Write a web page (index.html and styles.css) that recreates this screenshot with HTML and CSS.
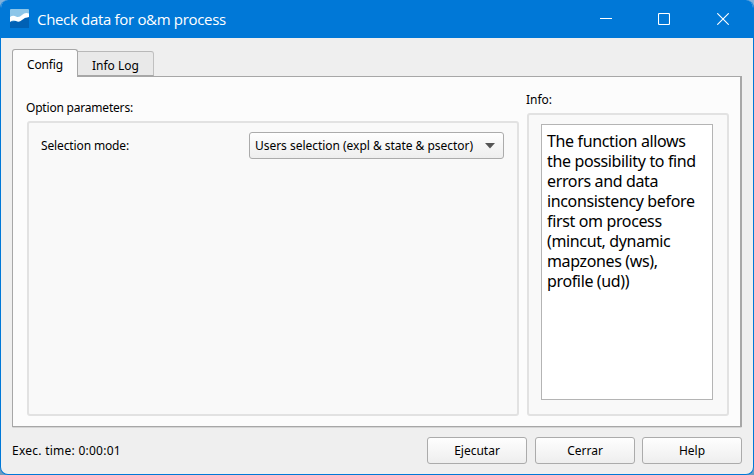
FILE: index.html
```html
<!DOCTYPE html>
<html lang="es">
<head>
<meta charset="utf-8">
<title>Check data for o&amp;m process</title>
<link rel="stylesheet" href="styles.css">
</head>
<body>
<div class="window">
  <header class="titlebar">
    <svg class="logo" width="19" height="19" viewBox="0 0 19 19"><rect width="19" height="19" rx="1" fill="#8dc6e9"/><path d="M0 12Q4 13 8 11T19 8V19H0Z" fill="#0061b5"/><path d="M0 8Q3 6 6 7.500T12 6T19 4.500V8Q15 8 12 11T6 12T0 13Z" fill="#fff"/></svg>
    <h1 class="title">Check data for o&amp;m process</h1>
    <div class="controls">
      <svg width="12" height="12" viewBox="0 0 12 12"><path d="M0 5.500H12"/></svg>
      <svg width="12" height="12" viewBox="0 0 12 12"><rect x=".5" y=".5" width="11" height="11" rx="1"/></svg>
      <svg width="12" height="12" viewBox="0 0 12 12"><path d="M.3.3 11.700 11.700M11.700.3.3 11.700"/></svg>
    </div>
  </header>
  <main class="content">
    <nav class="tabs">
      <div class="tab active"><span class="t-config">Config</span></div>
      <div class="tab"><span class="t-log">Info Log</span></div>
    </nav>
    <div class="panel">
      <section class="options">
        <div class="label t-options">Option parameters:</div>
        <div class="group row">
          <span class="t-mode">Selection mode:</span>
          <div class="combo"><span class="t-combo">Users selection (expl &amp; state &amp; psector)</span>
            <svg width="10" height="6" viewBox="0 0 10 6"><path d="M0 0H10L5 5.500Z" fill="#555"/></svg>
          </div>
        </div>
      </section>
      <section class="info">
        <div class="label t-info">Info:</div>
        <div class="group">
          <div class="textbox">The function allows<br>the possibility to find<br>errors and data<br>inconsistency before<br>first om process<br>(mincut, dynamic<br>mapzones (ws),<br>profile (ud))</div>
        </div>
      </section>
    </div>
    <footer class="footer">
      <span class="status">Exec. time: 0:00:01</span>
      <button class="btn">Ejecutar</button>
      <button class="btn">Cerrar</button>
      <button class="btn last">Help</button>
    </footer>
  </main>
</div>
</body>
</html>
```
FILE: styles.css
```css
* { box-sizing: border-box; }
body {
  margin: 0;
  background: linear-gradient(#82b2dc, #6d9cc0);
  font: 12px/16px "Noto Sans", sans-serif;
  color: #000;
  white-space: nowrap;
}
.window {
  width: 754px;
  height: 475px;
  border: 1px solid #0078d7;
  border-top: 0;
  border-radius: 8px;
  overflow: hidden;
  background: #efefef;
}
.titlebar {
  height: 38px;
  background: #0078d7;
  display: flex;
  align-items: center;
  padding: 0 24px 0 9px;
  color: #fff;
}
.logo { margin: -1px 8px 0 0; }
.title { margin: 0; font: 15px/20px "Open Sans", sans-serif; letter-spacing: -0.32px; }
.controls { margin-left: auto; display: flex; gap: 47px; }
.controls svg { fill: none; stroke: #fff; stroke-width: 1.1; }
.controls svg:first-child { margin-right: -1px; }
.content { padding: 11px 11px 0; }
.tabs { display: flex; align-items: flex-end; height: 28px; margin-bottom: -1px; position: relative; }
.tab {
  width: 76px;
  height: 25px;
  margin-bottom: 1px;
  padding: 6px 0 0 14px;
  background: #e9e9e9;
  border: 1px solid #b8b8b8;
  border-left: 0;
  border-right: 1px solid #c0c0c0;
  border-bottom-color: #a7a7a7;
  border-radius: 0 3px 0 0;
}
.tab.active {
  width: 66px;
  height: 28px;
  margin: 0;
  padding-top: 7px;
  background: #fcfcfc;
  border: 1px solid #a7a7a7;
  border-bottom: 0;
  border-radius: 3px 3px 0 0;
}
.t-config { letter-spacing: -0.15px; }
.panel {
  height: 351px;
  border: 1px solid #a7a7a7;
  border-right-width: 2px;
  background: #fcfcfc;
  box-shadow: 0 2px 0 -1px #d5d5d5, 0 1px 0 #e1e1e1;
  display: flex;
  gap: 8px;
  padding: 0 11px 11px 14px;
}
.options { width: 492px; padding-top: 23px; }
.info { width: 202px; padding-top: 15px; }
.label { height: 21px; margin-left: -1px; }
.t-options { letter-spacing: -0.2px; }
.group {
  height: 295px;
  border: 2px solid #e2e2e2;
  border-radius: 3px;
  background: #f9f9f9;
  padding: 9px 0 0 12px;
}
.info .group { height: 303px; }
.row { display: flex; align-items: flex-start; }
.row > .t-mode { width: 208px; padding-top: 6px; letter-spacing: -0.13px; }
.combo {
  width: 255px;
  height: 27px;
  border: 1px solid #ababab;
  border-radius: 3px;
  background: linear-gradient(#fefefe, #eeeeee);
  display: flex;
  align-items: center;
  justify-content: space-between;
  padding: 0 8px 0 5px;
}
.t-combo { letter-spacing: -0.03px; }
.textbox {
  width: 172px;
  height: 276px;
  border: 1px solid #b4b4b4;
  background: #fff;
  padding: 6px 5px;
  font-size: 16px;
  line-height: 20px;
  letter-spacing: -0.36px;
}
.footer { display: flex; padding-top: 10px; }
.status { margin-right: auto; padding-top: 6px; letter-spacing: 0.25px; }
.btn {
  width: 100px;
  height: 27px;
  margin: 0 0 0 8px;
  padding: 0;
  border: 1px solid #ababab;
  border-radius: 3px;
  background: linear-gradient(#fefefe, #eeeeee);
  font: inherit;
  color: #000;
}
.btn.last { margin-left: 7px; }
```
